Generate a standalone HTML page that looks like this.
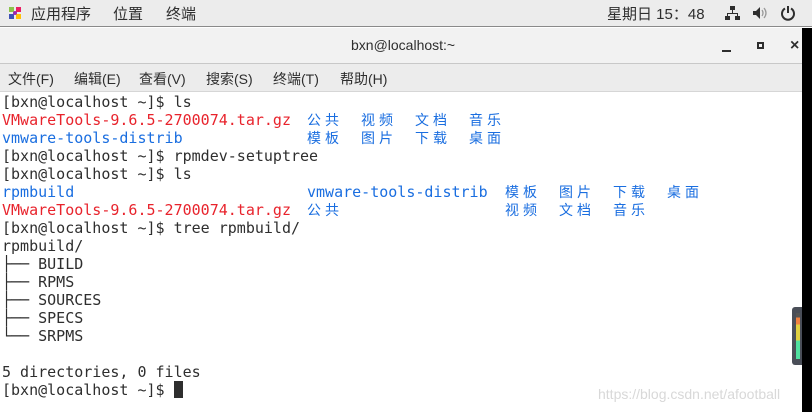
<!DOCTYPE html>
<html><head><meta charset="utf-8"><style>
*{margin:0;padding:0;box-sizing:border-box}
html,body{width:812px;height:412px;overflow:hidden}
body{background:#fff;position:relative;font-family:"Liberation Sans","Noto Sans CJK SC",sans-serif}
#top{position:absolute;left:0;top:0;width:812px;height:27px;background:#ececec;border-bottom:1px solid #8a8a8a;font-size:15px;color:#2e2e2e}
#title{position:absolute;left:0;top:28px;width:802px;height:36px;background:#f2f2f2;border-bottom:1px solid #c8c8c8}
#menu{position:absolute;left:0;top:64px;width:802px;height:28px;background:#ececec;border-bottom:1px solid #d6d6d6;font-size:14px;color:#2e2e2e}
#strip{position:absolute;left:802px;top:28px;width:10px;height:384px;background:#000}
#term{position:absolute;left:2px;top:93px;font-family:"DejaVu Sans Mono","Liberation Mono","Noto Sans CJK SC",monospace;font-size:15px;color:#2e2e2e}
.l{height:18px;line-height:18px;position:relative;white-space:pre}
.r{color:#e8232c}.b{color:#1a6ee0}
.c{position:absolute;top:0;color:#1a6ee0;font-family:"Noto Sans CJK SC",sans-serif;font-size:14px}
.t{position:absolute;font-size:15px}
</style></head><body>
<div id="top">
<svg style="position:absolute;left:8px;top:6px" width="14" height="14" viewBox="0 0 14 14"><rect x="1" y="1" width="5" height="5" fill="#8bc34a"/><rect x="8" y="1" width="5" height="5" fill="#e91e63"/><rect x="1" y="8" width="5" height="5" fill="#3f51b5"/><rect x="8" y="8" width="5" height="5" fill="#ffc107"/><circle cx="7" cy="7" r="2" fill="#9c27b0"/></svg>
<span class="t" style="left:31px;top:3px">应用程序</span>
<span class="t" style="left:113px;top:3px">位置</span>
<span class="t" style="left:166px;top:3px">终端</span>
<span class="t" style="left:607px;top:3px">星期日 15：48</span>
<svg style="position:absolute;left:724px;top:5px" width="16" height="16" viewBox="0 0 16 16" fill="#2e2e2e"><rect x="6" y="1" width="5" height="4"/><rect x="8" y="5" width="1" height="4"/><rect x="3" y="8" width="11" height="1"/><rect x="3" y="8" width="1" height="3"/><rect x="13" y="8" width="1" height="3"/><rect x="1" y="11" width="5" height="4"/><rect x="11" y="11" width="5" height="4"/></svg>
<svg style="position:absolute;left:752px;top:6px" width="16" height="14" viewBox="0 0 16 14"><path d="M1 5h3l4-4v12l-4-4H1z" fill="#2e2e2e"/><path d="M10 4q2 3 0 6M12 2q4 5 0 10" stroke="#999" stroke-width="1.3" fill="none"/></svg>
<svg style="position:absolute;left:780px;top:5px" width="16" height="16" viewBox="0 0 16 16"><path d="M5 3.5A6 6 0 1 0 11 3.5" stroke="#2e2e2e" stroke-width="2" fill="none"/><rect x="7" y="1" width="2" height="7" fill="#2e2e2e"/></svg>
</div>
<div id="title">
<span style="position:absolute;left:351px;top:9px;font-size:14px;color:#2e2e2e">bxn@localhost:~</span>
<div style="position:absolute;left:722px;top:22px;width:9px;height:2px;background:#2e2e2e"></div>
<div style="position:absolute;left:757px;top:14px;width:7px;height:7px;border:2px solid #2e2e2e"></div>
<span style="position:absolute;left:790px;top:9px;font-size:16px;font-weight:bold;color:#2e2e2e">×</span>
</div>
<div id="menu">
<span class="t" style="font-size:14px;left:8px;top:5px">文件(F)</span>
<span class="t" style="font-size:14px;left:74px;top:5px">编辑(E)</span>
<span class="t" style="font-size:14px;left:139px;top:5px">查看(V)</span>
<span class="t" style="font-size:14px;left:206px;top:5px">搜索(S)</span>
<span class="t" style="font-size:14px;left:273px;top:5px">终端(T)</span>
<span class="t" style="font-size:14px;left:340px;top:5px">帮助(H)</span>
</div>
<div id="strip"></div>
<div id="term"><div class="l">[bxn@localhost ~]$ ls</div><div class="l"><span class="r">VMwareTools-9.6.5-2700074.tar.gz</span><span class="c" style="left:305px">公</span><span class="c" style="left:323px">共</span><span class="c" style="left:359px">视</span><span class="c" style="left:377px">频</span><span class="c" style="left:413px">文</span><span class="c" style="left:431px">档</span><span class="c" style="left:467px">音</span><span class="c" style="left:485px">乐</span></div><div class="l"><span class="b">vmware-tools-distrib</span><span class="c" style="left:305px">模</span><span class="c" style="left:323px">板</span><span class="c" style="left:359px">图</span><span class="c" style="left:377px">片</span><span class="c" style="left:413px">下</span><span class="c" style="left:431px">载</span><span class="c" style="left:467px">桌</span><span class="c" style="left:485px">面</span></div><div class="l">[bxn@localhost ~]$ rpmdev-setuptree</div><div class="l">[bxn@localhost ~]$ ls</div><div class="l"><span class="b">rpmbuild</span><span class="b" style="position:absolute;left:305px">vmware-tools-distrib</span><span class="c" style="left:503px">模</span><span class="c" style="left:521px">板</span><span class="c" style="left:557px">图</span><span class="c" style="left:575px">片</span><span class="c" style="left:611px">下</span><span class="c" style="left:629px">载</span><span class="c" style="left:665px">桌</span><span class="c" style="left:683px">面</span></div><div class="l"><span class="r">VMwareTools-9.6.5-2700074.tar.gz</span><span class="c" style="left:305px">公</span><span class="c" style="left:323px">共</span><span class="c" style="left:503px">视</span><span class="c" style="left:521px">频</span><span class="c" style="left:557px">文</span><span class="c" style="left:575px">档</span><span class="c" style="left:611px">音</span><span class="c" style="left:629px">乐</span></div><div class="l">[bxn@localhost ~]$ tree rpmbuild/</div><div class="l">rpmbuild/</div><div class="l">├── BUILD</div><div class="l">├── RPMS</div><div class="l">├── SOURCES</div><div class="l">├── SPECS</div><div class="l">└── SRPMS</div><div class="l"> </div><div class="l">5 directories, 0 files</div><div class="l">[bxn@localhost ~]$ <span style="display:inline-block;width:9px;height:17px;background:#2e2e2e;vertical-align:-3px"></span></div></div>
<div style="position:absolute;left:792px;top:307px;width:10px;height:58px;background:#4a4e58;border-radius:3px 0 0 3px"></div>
<div style="position:absolute;left:796px;top:313px;width:4px;height:46px;background:linear-gradient(#555 0 10%,#f08040 10% 25%,#e0d040 25% 60%,#50e0a0 60%)"></div>
<div style="position:absolute;left:598px;top:386px;font-size:14px;color:#d8d8d8">https://blog.csdn.net/afootball</div>
</body></html>
